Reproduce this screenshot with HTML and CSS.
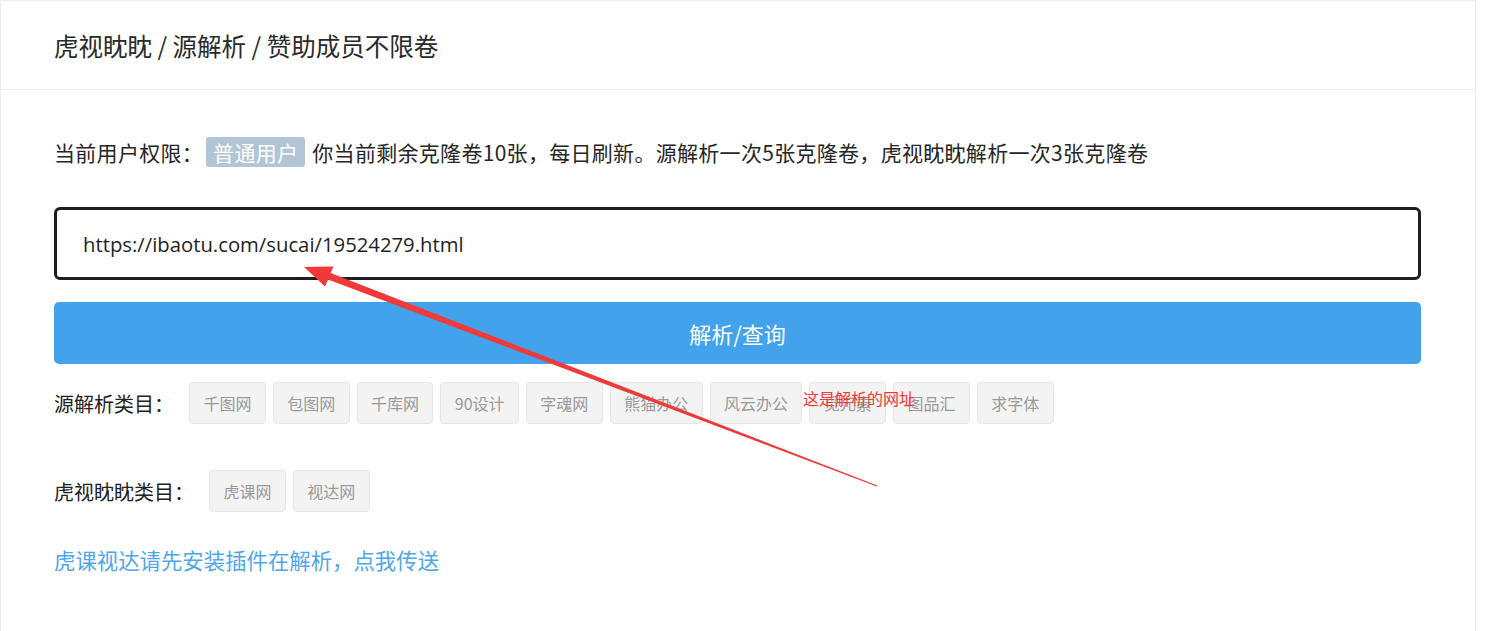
FILE: index.html
```html
<!DOCTYPE html>
<html lang="zh-CN">
<head>
<meta charset="utf-8">
<title>源解析</title>
<link rel="stylesheet" href="styles.css">
</head>
<body>
<div class="card">
  <div class="card-header">虎视眈眈 / 源解析 / 赞助成员不限卷</div>
  <div class="card-body">
    <p class="perm">当前用户权限：<span class="badge">普通用户</span> 你当前剩余克隆卷10张，每日刷新。源解析一次5张克隆卷，虎视眈眈解析一次3张克隆卷</p>
    <div class="url-input">https://ibaotu.com/sucai/19524279.html</div>
    <button class="btn">解析/查询</button>
    <div class="cat-row">
      <span class="cat-label">源解析类目：</span>
      <div class="tags">
        <span class="tag">千图网</span>
        <span class="tag">包图网</span>
        <span class="tag">千库网</span>
        <span class="tag">90设计</span>
        <span class="tag">字魂网</span>
        <span class="tag">熊猫办公</span>
        <span class="tag">风云办公</span>
        <span class="tag">觅元素</span>
        <span class="tag">图品汇</span>
        <span class="tag">求字体</span>
      </div>
    </div>
    <div class="cat-row cat-row-2">
      <span class="cat-label">虎视眈眈类目：</span>
      <div class="tags">
        <span class="tag">虎课网</span>
        <span class="tag">视达网</span>
      </div>
    </div>
    <a class="plugin-link" href="#">虎课视达请先安装插件在解析，点我传送</a>
  </div>
  <svg class="arrow" width="1476" height="631" viewBox="0 0 1476 631">
    <polygon fill="#f03a3a" points="304,267 333.5,266.5 330.6,273.1 877.2,485.6 876.8,486.4 328,279.6 325,286.5"/>
  </svg>
  <span class="note">这是解析的网址</span>
</div>
</body>
</html>
```
FILE: styles.css
```css
html, body {
  margin: 0;
  padding: 0;
  background: #fff;
}
body {
  font-family: "Noto Sans", "Noto Sans CJK SC", sans-serif;
  color: #222;
}
.card {
  position: relative;
  width: 1474px;
  height: 640px;
  border: 1px solid #ececec;
  box-sizing: content-box;
}
.card-header {
  height: 88px;
  border-bottom: 1px solid #ececec;
  padding-left: 53px;
  display: flex;
  align-items: center;
  font-size: 24.5px;
  color: #2a2a2a;
  font-family: "Noto Sans CJK SC", sans-serif;
}
.card-body {
  padding: 0 54px 0 53px;
}
.perm {
  margin: 0;
  padding-top: 44px;
  height: 35px;
  display: flex;
  align-items: center;
  font-size: 21px;
  font-family: "Noto Sans CJK SC", sans-serif;
  white-space: nowrap;
  letter-spacing: 0.3px;
  color: #262626;
}
.badge {
  display: inline-block;
  background: #b2c5d6;
  color: #fff;
  border-radius: 3px;
  padding: 0 7px;
  margin: 0 7px 0 3px;
  height: 30px;
  line-height: 30px;
}
.url-input {
  box-sizing: border-box;
  margin-top: 38px;
  height: 73px;
  border: 3px solid #1e1e1e;
  border-radius: 6px;
  padding-left: 26px;
  display: flex;
  align-items: center;
  font-size: 20.3px;
  font-family: "Open Sans", "Noto Sans", sans-serif;
  color: #1f1f1f;
}
.btn {
  display: block;
  width: 100%;
  margin-top: 22px;
  height: 62px;
  border: none;
  border-radius: 5px;
  background: #42a3ec;
  color: #fff;
  font-size: 22px;
  font-family: "Noto Sans CJK SC", sans-serif;
  padding: 0;
}
.cat-row {
  display: flex;
  align-items: center;
  margin-top: 18px;
}
.cat-row-2 {
  margin-top: 46px;
}
.cat-label {
  font-size: 20px;
  font-family: "Noto Sans CJK SC", sans-serif;
  color: #222;
  margin-right: 15px;
  white-space: nowrap;
}
.tags {
  display: flex;
  gap: 7px;
}
.tag {
  display: flex;
  align-items: center;
  box-sizing: border-box;
  height: 42px;
  padding: 0 13.4px;
  background: #f3f3f3;
  border: 1px solid #e6e6e6;
  border-radius: 4px;
  font-size: 16px;
  font-family: "Noto Sans CJK SC", sans-serif;
  color: #9a9a9a;
  white-space: nowrap;
}
.plugin-link {
  display: block;
  margin-top: 32px;
  font-size: 21.4px;
  font-family: "Noto Sans CJK SC", sans-serif;
  color: #4ea7ec;
  text-decoration: none;
}
.arrow {
  position: absolute;
  left: -1px;
  top: -1px;
  pointer-events: none;
}
.note {
  position: absolute;
  left: 802px;
  top: 385px;
  font-size: 16px;
  font-family: "Noto Sans CJK SC", sans-serif;
  color: #f23838;
  white-space: nowrap;
}
```
